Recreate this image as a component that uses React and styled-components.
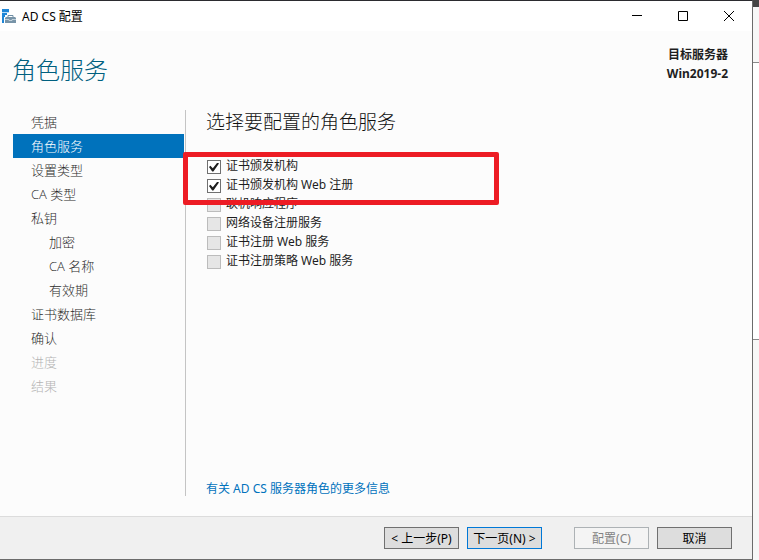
import React, { useState } from 'react';
import styled, { createGlobalStyle } from 'styled-components';

const GlobalStyle = createGlobalStyle`
  * {
    box-sizing: border-box;
  }
  body {
    margin: 0;
    font-family: "Noto Sans", "Noto Sans CJK SC", sans-serif;
    font-size: 12px;
    color: #1e1e1e;
  }
`;

const Desktop = styled.div`
  display: flex;
  min-height: 100vh;
`;

const Dialog = styled.div`
  flex: 1;
  display: flex;
  flex-direction: column;
  background: #fcfcfc;
  border: solid #6b6b6b;
  border-width: 1px 1px 1px 0;
  border-top-color: #2b2b2f;
`;

const Backdrop = styled.div`
  width: 6px;
  display: flex;
  flex-direction: column;
  background: #f7f7f7;
  border-top: 7px solid #444;
`;

const BackdropPage = styled.div`
  height: 278px;
  margin-top: 55px;
  background: #fff;
  border: solid #8a8a8a;
  border-width: 1px 0;
`;

const TitleBar = styled.div`
  height: 30px;
  display: flex;
  align-items: center;
  padding-left: 2px;
  background: #fff;
  color: #000;
`;

const TitleText = styled.div`
  flex: 1;
  margin-left: 6px;
`;

const WindowButton = styled.button`
  width: 46px;
  height: 30px;
  padding: 0;
  display: flex;
  align-items: center;
  justify-content: center;
  border: 0;
  background: none;
  color: #000;
`;

const Header = styled.header`
  height: 79px;
  display: flex;
  justify-content: space-between;
  padding: 14px 24px 0 12px;
`;

const PageTitle = styled.h1`
  margin: 8px 0 0;
  font-size: 24px;
  line-height: 34px;
  font-weight: 300;
  color: #00607f;
`;

const Target = styled.div`
  text-align: right;
  font-weight: 700;
  line-height: 19px;
`;

const Body = styled.main`
  flex: 1;
  display: flex;
  padding: 0 20px 20px 13px;
`;

const Nav = styled.nav`
  width: 173px;
  padding-right: 1px;
  border-right: 1px solid #c4c4c4;
`;

const NavItem = styled.button`
  display: block;
  width: 100%;
  height: 24px;
  padding: 0 0 0 ${props => (props.$nested ? 36 : 18)}px;
  border: 0;
  background: ${props => (props.$active ? '#0072bc' : 'none')};
  color: ${props => (props.$active ? '#fff' : '#2b2b2b')};
  font-family: "Open Sans", "Noto Sans CJK SC", sans-serif;
  font-size: 13px;
  font-weight: 300;
  line-height: 24px;
  text-align: left;

  &:disabled {
    color: #b4b4b4;
  }
`;

const Panel = styled.section`
  flex: 1;
  display: flex;
  flex-direction: column;
  padding-left: 20px;
`;

const PanelTitle = styled.h2`
  margin: 0 0 23px;
  font-size: 19px;
  line-height: 24px;
  font-weight: 300;
  color: #111;
`;

const RoleList = styled.div`
  flex: 1;
  position: relative;
`;

const Role = styled.label`
  display: flex;
  align-items: flex-start;
  gap: 5px;
  height: 19px;
  line-height: 17px;
`;

const CheckBox = styled.input`
  appearance: none;
  flex: none;
  width: 14px;
  height: 14px;
  margin: 3px 0 0 1px;
  display: grid;
  place-items: center;
  border: 1px solid #707070;
  background: #fff;

  &:checked::before {
    content: "";
    width: 10px;
    height: 9px;
    background: #1e1e1e;
    clip-path: polygon(0 50%, 14% 36%, 38% 64%, 84% 0, 100% 10%, 44% 100%, 32% 100%);
  }

  &:disabled {
    border-color: #bcbcbc;
    background: #e6e6e6;
  }
`;

const Highlight = styled.div`
  position: absolute;
  top: -5px;
  left: -23px;
  width: 316px;
  height: 53px;
  border: 5px solid #ed1c24;
  border-radius: 2px;
  pointer-events: none;
`;

const HelpLink = styled.a`
  align-self: flex-start;
  margin-bottom: -3px;
  line-height: 20px;
  color: #0072bc;
  text-decoration: none;
`;

const Footer = styled.footer`
  display: flex;
  justify-content: flex-end;
  gap: 8px;
  padding: 10px 20px;
  background: #f0f0f0;
  border-top: 1px solid #dcdcdc;
`;

const Button = styled.button`
  width: 75px;
  height: 22px;
  padding: 1px 0 0;
  border: 1px solid ${props => (props.$primary ? '#0078d7' : '#707070')};
  background: #ddd;
  color: #000;
  font-family: inherit;
  font-size: 12px;
  line-height: 19px;
  white-space: nowrap;

  &:disabled {
    margin-left: 24px;
    border-color: #adb2b5;
    background: #f4f4f4;
    color: #838383;
  }
`;

const STEPS = [
    { label: '凭据' },
    { label: '角色服务' },
    { label: '设置类型' },
    { label: 'CA 类型' },
    { label: '私钥' },
    { label: '加密', nested: true },
    { label: 'CA 名称', nested: true },
    { label: '有效期', nested: true },
    { label: '证书数据库' },
    { label: '确认' },
    { label: '进度', disabled: true },
    { label: '结果', disabled: true },
];

const ROLES = [
    { label: '证书颁发机构', checked: true },
    { label: '证书颁发机构 Web 注册', checked: true },
    { label: '联机响应程序', disabled: true },
    { label: '网络设备注册服务', disabled: true },
    { label: '证书注册 Web 服务', disabled: true },
    { label: '证书注册策略 Web 服务', disabled: true },
];

// server tower with a toolbox in front of it
function AppIcon() {
    return (
        <svg width="14" height="14" viewBox="0 0 14 14" aria-hidden="true">
            <path d="M0 0h7v3H0zM0 4h5v2H3v2H2v6H0z" fill="#1f86d6" />
            <path d="M0 3h7v1H0z" fill="#b9dbf5" />
            <path d="M6 8V6.5h5V8" fill="none" stroke="#6f8da3" />
            <path d="M4 8h9l1 1v5H3V9z" fill="#7894a8" />
            <path d="M3 10.5h4v1h3v-1h4" fill="none" stroke="#dfe8ee" strokeWidth="0.7" />
        </svg>
    );
}

export default function App() {
    const [active, setActive] = useState('角色服务');

    return (
        <Desktop>
            <GlobalStyle />
            <Dialog>
                <TitleBar>
                    <AppIcon />
                    <TitleText>AD CS 配置</TitleText>
                    <WindowButton aria-label="最小化">
                        <svg width="10" height="10"><path d="M0 4.5h10" stroke="currentColor" /></svg>
                    </WindowButton>
                    <WindowButton aria-label="最大化">
                        <svg width="10" height="10"><path d="M.5.5h9v9h-9z" fill="none" stroke="currentColor" /></svg>
                    </WindowButton>
                    <WindowButton aria-label="关闭">
                        <svg width="10" height="10"><path d="M0 0l10 10M10 0L0 10" stroke="currentColor" /></svg>
                    </WindowButton>
                </TitleBar>
                <Header>
                    <PageTitle>角色服务</PageTitle>
                    <Target>
                        <div>目标服务器</div>
                        <div>Win2019-2</div>
                    </Target>
                </Header>
                <Body>
                    <Nav>
                        {STEPS.map(step =>
                            <NavItem
                                key={step.label}
                                $nested={step.nested}
                                $active={step.label === active}
                                disabled={step.disabled}
                                onClick={() => setActive(step.label)}
                            >
                                {step.label}
                            </NavItem>
                        )}
                    </Nav>
                    <Panel>
                        <PanelTitle>选择要配置的角色服务</PanelTitle>
                        <RoleList>
                            {ROLES.map(role =>
                                <Role key={role.label}>
                                    <CheckBox type="checkbox" defaultChecked={role.checked} disabled={role.disabled} />
                                    {role.label}
                                </Role>
                            )}
                            <Highlight />
                        </RoleList>
                        <HelpLink href="#more">有关 AD CS 服务器角色的更多信息</HelpLink>
                    </Panel>
                </Body>
                <Footer>
                    <Button>&lt; 上一步(P)</Button>
                    <Button $primary>下一页(N) &gt;</Button>
                    <Button disabled>配置(C)</Button>
                    <Button>取消</Button>
                </Footer>
            </Dialog>
            <Backdrop>
                <BackdropPage />
            </Backdrop>
        </Desktop>
    );
}
